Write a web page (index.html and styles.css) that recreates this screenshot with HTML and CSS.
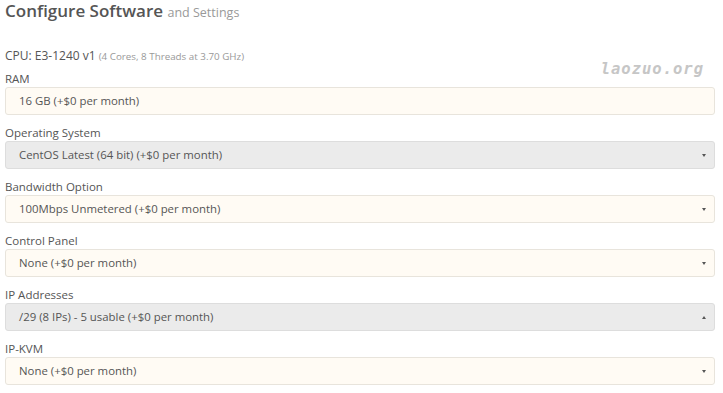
FILE: index.html
```
<!DOCTYPE html>
<html lang="en">
<head>
    <meta charset="UTF-8">
    <title>Configure Software</title>
    <link rel="stylesheet" href="styles.css">
</head>
<body>
    <h1>Configure Software <small>and Settings</small></h1>
    <div class="cpu">CPU: E3-1240 v1 <span>(4 Cores, 8 Threads at 3.70 GHz)</span></div>
    <div class="watermark">laozuo.org</div>

    <div class="field first">
        <label>RAM</label>
        <div class="box">16 GB (+$0 per month)</div>
    </div>
    <div class="field">
        <label>Operating System</label>
        <div class="box select disabled">CentOS Latest (64 bit) (+$0 per month)<span class="caret"></span></div>
    </div>
    <div class="field">
        <label>Bandwidth Option</label>
        <div class="box select">100Mbps Unmetered (+$0 per month)<span class="caret"></span></div>
    </div>
    <div class="field">
        <label>Control Panel</label>
        <div class="box select">None (+$0 per month)<span class="caret"></span></div>
    </div>
    <div class="field">
        <label>IP Addresses</label>
        <div class="box select disabled">/29 (8 IPs) - 5 usable (+$0 per month)<span class="caret up"></span></div>
    </div>
    <div class="field">
        <label>IP-KVM</label>
        <div class="box select">None (+$0 per month)<span class="caret"></span></div>
    </div>
</body>
</html>
```
FILE: styles.css
```
body {
    margin: 0;
    padding: 0 8px 0 5px;
    background: #ffffff;
    font-family: "Open Sans", "DejaVu Sans", sans-serif;
    color: #555555;
    position: relative;
}
h1 {
    font-size: 17px;
    font-weight: 600;
    color: #555555;
    margin: 0;
    padding-top: 2px;
    line-height: 18px;
}
h1 small {
    font-size: 12.5px;
    font-weight: 400;
    color: #999999;
}
.cpu {
    font-size: 12px;
    margin-top: 26px;
    line-height: 16px;
    color: #555555;
}
.cpu span {
    font-size: 9.8px;
    color: #999999;
}
.watermark {
    position: absolute;
    right: 19px;
    top: 60px;
    font-family: "DejaVu Sans Mono", monospace;
    font-weight: bold;
    font-style: italic;
    font-size: 15.5px;
    letter-spacing: 1px;
    color: #c6c6c6;
}
.field {
    margin-bottom: 10px;
}
.field.first {
    margin-top: 6px;
}
.field label {
    display: block;
    font-size: 11.5px;
    line-height: 16px;
    color: #555555;
}
.box {
    position: relative;
    height: 26px;
    line-height: 26px;
    padding-left: 13px;
    font-size: 11.4px;
    color: #555555;
    background: #fffbf4;
    border: 1px solid #e8e4dc;
    border-radius: 3px;
}
.box.disabled {
    background: #ebebeb;
    border-color: #dddddd;
}
.caret {
    position: absolute;
    right: 8px;
    top: 12px;
    width: 0;
    height: 0;
    border-left: 2.5px solid transparent;
    border-right: 2.5px solid transparent;
    border-top: 3px solid #555555;
}
.caret.up {
    border-top: none;
    border-bottom: 3px solid #555555;
}
```
